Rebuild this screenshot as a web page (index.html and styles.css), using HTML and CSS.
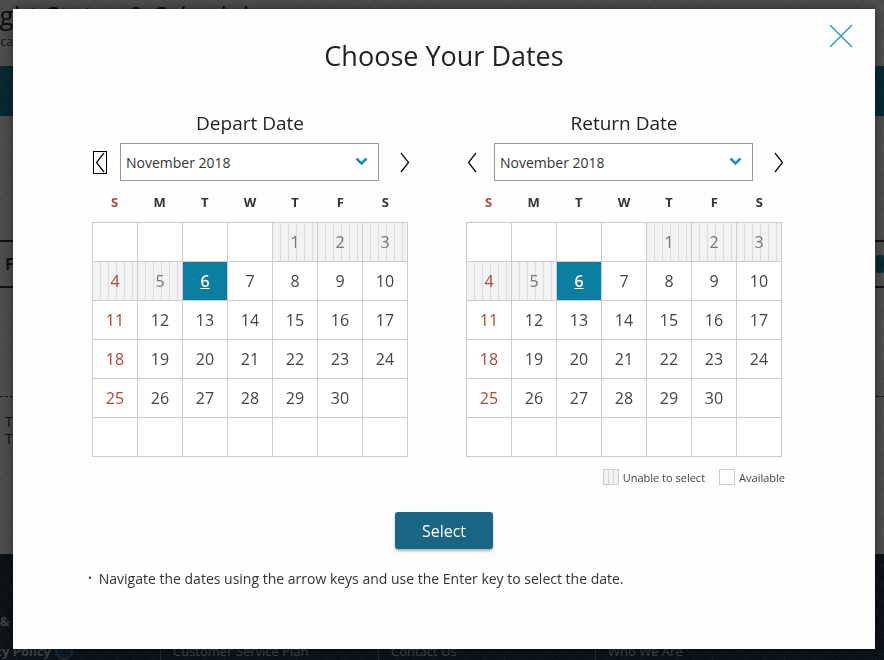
FILE: index.html
```html
<!DOCTYPE html>
<html lang="en">
<head>
<meta charset="utf-8">
<title>Choose Your Dates</title>
<link rel="stylesheet" href="styles.css">
</head>
<body>
<div class="page">
  <header class="page-head">
    <h1 class="page-title">Flight Status &amp; Schedules</h1>
    <p class="page-sub">Locate a flight and view its schedules for upcoming dates.</p>
  </header>
  <div class="band"></div>
  <div class="page-body">
    <div class="tabs"><span class="tab">Flight Number</span><span class="tab-btn"></span></div>
    <div class="spacer"></div>
    <div class="notes"><p>T</p><p>T</p></div>
  </div>
  <footer class="footer">
    <div class="foot-row top"><span class="strong">Terms &amp; Notices</span><span>Travel Information</span><span>Customer Support</span><span>About Our Group</span></div>
    <div class="foot-row bottom"><span class="strong">Privacy Policy <i class="seal"></i></span><span>Customer Service Plan</span><span>Contact Us</span><span>Who We Are</span></div>
  </footer>
</div>

<div class="overlay">
  <div class="modal">
    <button class="close" aria-label="Close">
      <svg width="24" height="24" viewBox="0 0 24 24"><path d="M1 1 L23 23 M23 1 L1 23" stroke="#3a9fc2" stroke-width="1.6" fill="none"/></svg>
    </button>
    <h2 class="modal-title">Choose Your Dates</h2>

    <div class="cals">
      <section class="cal">
        <h3 class="cal-title">Depart Date</h3>
        <div class="nav">
          <button class="arrow prev focused"><svg width="12" height="21" viewBox="0 0 12 21"><polyline points="10,1 2.5,10.5 10,20" fill="none" stroke="#111" stroke-width="1.3"/></svg></button>
          <div class="month">November 2018<svg class="chev" width="13" height="9" viewBox="0 0 13 9"><polyline points="1.5,1.5 6.5,6.5 11.5,1.5" fill="none" stroke="#1d8fb3" stroke-width="2.6"/></svg></div>
          <button class="arrow next"><svg width="10" height="21" viewBox="0 0 10 21"><polyline points="1,1 8.5,10.5 1,20" fill="none" stroke="#111" stroke-width="1.3"/></svg></button>
        </div>
        <div class="dow"><span class="sun">S</span><span>M</span><span>T</span><span>W</span><span>T</span><span>F</span><span>S</span></div>
        <div class="grid">
          <span></span><span></span><span></span><span></span><span class="off">1</span><span class="off">2</span><span class="off">3</span>
          <span class="off sun">4</span><span class="off">5</span><span class="sel">6</span><span>7</span><span>8</span><span>9</span><span>10</span>
          <span class="sun">11</span><span>12</span><span>13</span><span>14</span><span>15</span><span>16</span><span>17</span>
          <span class="sun">18</span><span>19</span><span>20</span><span>21</span><span>22</span><span>23</span><span>24</span>
          <span class="sun">25</span><span>26</span><span>27</span><span>28</span><span>29</span><span>30</span><span></span>
          <span></span><span></span><span></span><span></span><span></span><span></span><span></span>
        </div>
      </section>

      <section class="cal">
        <h3 class="cal-title">Return Date</h3>
        <div class="nav">
          <button class="arrow prev"><svg width="12" height="21" viewBox="0 0 12 21"><polyline points="10,1 2.5,10.5 10,20" fill="none" stroke="#111" stroke-width="1.3"/></svg></button>
          <div class="month">November 2018<svg class="chev" width="13" height="9" viewBox="0 0 13 9"><polyline points="1.5,1.5 6.5,6.5 11.5,1.5" fill="none" stroke="#1d8fb3" stroke-width="2.6"/></svg></div>
          <button class="arrow next"><svg width="10" height="21" viewBox="0 0 10 21"><polyline points="1,1 8.5,10.5 1,20" fill="none" stroke="#111" stroke-width="1.3"/></svg></button>
        </div>
        <div class="dow"><span class="sun">S</span><span>M</span><span>T</span><span>W</span><span>T</span><span>F</span><span>S</span></div>
        <div class="grid">
          <span></span><span></span><span></span><span></span><span class="off">1</span><span class="off">2</span><span class="off">3</span>
          <span class="off sun">4</span><span class="off">5</span><span class="sel">6</span><span>7</span><span>8</span><span>9</span><span>10</span>
          <span class="sun">11</span><span>12</span><span>13</span><span>14</span><span>15</span><span>16</span><span>17</span>
          <span class="sun">18</span><span>19</span><span>20</span><span>21</span><span>22</span><span>23</span><span>24</span>
          <span class="sun">25</span><span>26</span><span>27</span><span>28</span><span>29</span><span>30</span><span></span>
          <span></span><span></span><span></span><span></span><span></span><span></span><span></span>
        </div>
        <div class="legend">
          <span class="key off-key"></span><span class="key-label">Unable to select</span>
          <span class="key"></span><span class="key-label">Available</span>
        </div>
      </section>
    </div>

    <div class="actions"><button class="select-btn">Select</button></div>
    <ul class="help"><li>Navigate the dates using the arrow keys and use the Enter key to select the date.</li></ul>
  </div>
</div>
</body>
</html>
```

FILE: styles.css
```css
* { box-sizing: border-box; }
html, body { margin: 0; padding: 0; }
body {
  width: 884px;
  height: 660px;
  overflow: hidden;
  font-family: "Open Sans", "Liberation Sans", sans-serif;
  background: #fff;
  color: #333;
}

/* underlying page */
.page { height: 660px; display: flex; flex-direction: column; overflow: hidden; }
.page-head { height: 66px; margin-left: -27px; }
.page-title { margin: 0; font-size: 26px; font-weight: 400; line-height: 30px; color: #222; }
.page-sub { margin: 4px 0 0 14px; font-size: 12px; line-height: 16px; color: #444; white-space: nowrap; }
.band { height: 50px; background: #12809f; }
.page-body { height: 438px; padding-top: 124px; }
.tabs { display: flex; justify-content: space-between; align-items: center; height: 48px; border-top: 2px solid #333; border-bottom: 2px solid #333; padding-left: 5px; }
.tab { font-weight: 700; font-size: 16px; color: #333; }
.tab-btn { width: 8px; height: 18px; background: #1a8db0; border-radius: 2px; }
.spacer { height: 108px; }
.notes { border-top: 1px dashed #333; padding: 16px 0 0 5px; font-size: 14px; line-height: 17px; }
.notes p { margin: 0; }
.footer { flex: 1; background: #22394a; color: #cfd8de; }
.foot-row { display: grid; grid-template-columns: 160px 218px 217px 1fr; font-size: 13px; line-height: 18px; }
.foot-row span { padding-left: 12px; white-space: nowrap; }
.foot-row.top { height: 88px; padding-top: 58px; font-weight: 700; }
.foot-row.top .strong { margin-left: -44px; padding-left: 0; }
.foot-row.bottom span + span { border-left: 1px solid #7f8d97; }
.foot-row.bottom .strong { font-weight: 700; padding-left: 0; margin-left: -38px; display: flex; align-items: center; gap: 4px; }
.seal { display: inline-block; width: 18px; height: 18px; border-radius: 50%; border: 2px solid #5d86a8; background: #2e5677; }

/* overlay and modal */
.overlay {
  position: fixed;
  inset: 0;
  padding: 9px 9px 11px 13px;
  display: flex;
  background:
    repeating-linear-gradient(45deg, rgba(255,255,255,0.035) 0 1px, rgba(0,0,0,0) 1px 3px),
    repeating-linear-gradient(-45deg, rgba(0,0,0,0.05) 0 1px, rgba(0,0,0,0) 1px 3px),
    rgba(0,0,0,0.7);
}
.modal {
  position: relative;
  flex: 1;
  background: #fdfdfd;
  box-shadow: 0 0 10px rgba(0,0,0,0.45);
  padding-top: 30px;
}
.close {
  position: absolute;
  top: 15px;
  right: 22px;
  width: 24px;
  height: 24px;
  padding: 0;
  border: 0;
  background: none;
}
.close svg { display: block; }
.modal-title {
  margin: 0;
  text-align: center;
  font-size: 27px;
  font-weight: 400;
  line-height: 34px;
  color: #222;
}

.cals { display: flex; gap: 58px; padding-left: 79px; margin-top: 38px; }
.cal { width: 316px; }
.cal-title { margin: 0; text-align: center; font-size: 19px; font-weight: 400; line-height: 24px; color: #222; }
.nav { display: flex; align-items: center; justify-content: flex-start; margin-top: 8px; height: 38px; }
.arrow { border: 0; background: none; padding: 0; height: 23px; display: flex; align-items: center; flex: none; }
.arrow.prev { width: 28px; justify-content: flex-start; }
.arrow.next { width: 31px; justify-content: flex-end; }
.arrow svg { display: block; }
.arrow.prev.focused svg { outline: 1px solid #000; margin-left: 2px; }
.month {
  flex: none;
  width: 259px;
  height: 38px;
  border: 1px solid #999;
  display: flex;
  align-items: center;
  justify-content: space-between;
  padding: 0 10px 0 5px;
  font-size: 14px;
  color: #333;
  background: #fff;
}
.chev { display: block; margin-top: -2px; }

.dow { display: grid; grid-template-columns: repeat(7, 1fr); margin-top: 11px; line-height: 20px; font-size: 13px; font-weight: 700; color: #333; text-align: center; }
.dow .sun { color: #b5452c; }

.grid {
  margin-top: 10px;
  display: grid;
  grid-template-columns: repeat(7, 44px);
  grid-auto-rows: 38px;
  gap: 1px;
  padding: 1px;
  background: #cccccc;
  width: 316px;
}
.grid span {
  background: #fff;
  display: flex;
  align-items: center;
  justify-content: center;
  font-size: 16px;
  color: #444;
}
.grid span.sun { color: #b5452c; }
.grid span.off {
  background: repeating-linear-gradient(90deg, #f2f2f2 0 7px, #dcdcdc 7px 8px);
  color: #777;
}
.grid span.off.sun { color: #b5452c; }
.grid span.sel { background: #0a7f9f; color: #fff; text-decoration: underline; font-weight: 600; }

.legend { display: flex; align-items: center; justify-content: flex-end; margin-top: 12px; margin-right: -3px; font-size: 11px; color: #444; }
.key { width: 16px; height: 16px; border: 1px solid #ccc; background: #fff; }
.key.off-key { background: repeating-linear-gradient(90deg, #f2f2f2 0 4px, #d6d6d6 4px 5px); }
.key-label { margin-left: 4px; margin-right: 14px; }
.key-label:last-child { margin-right: 0; }

.actions { display: flex; justify-content: center; margin-top: 27px; }
.select-btn {
  width: 98px;
  height: 37px;
  border: 0;
  border-radius: 3px;
  background: #1b6584;
  color: #fff;
  font-family: "Open Sans", "Liberation Sans", sans-serif;
  font-size: 16px;
  box-shadow: 0 2px 3px rgba(0,0,0,0.3);
}
.help { margin: 20px 0 0; padding: 0 0 0 75px; list-style: none; font-size: 14px; color: #333; }
.help li::before { content: "\2022"; font-size: 10px; margin-right: 7px; vertical-align: 2px; }
```
